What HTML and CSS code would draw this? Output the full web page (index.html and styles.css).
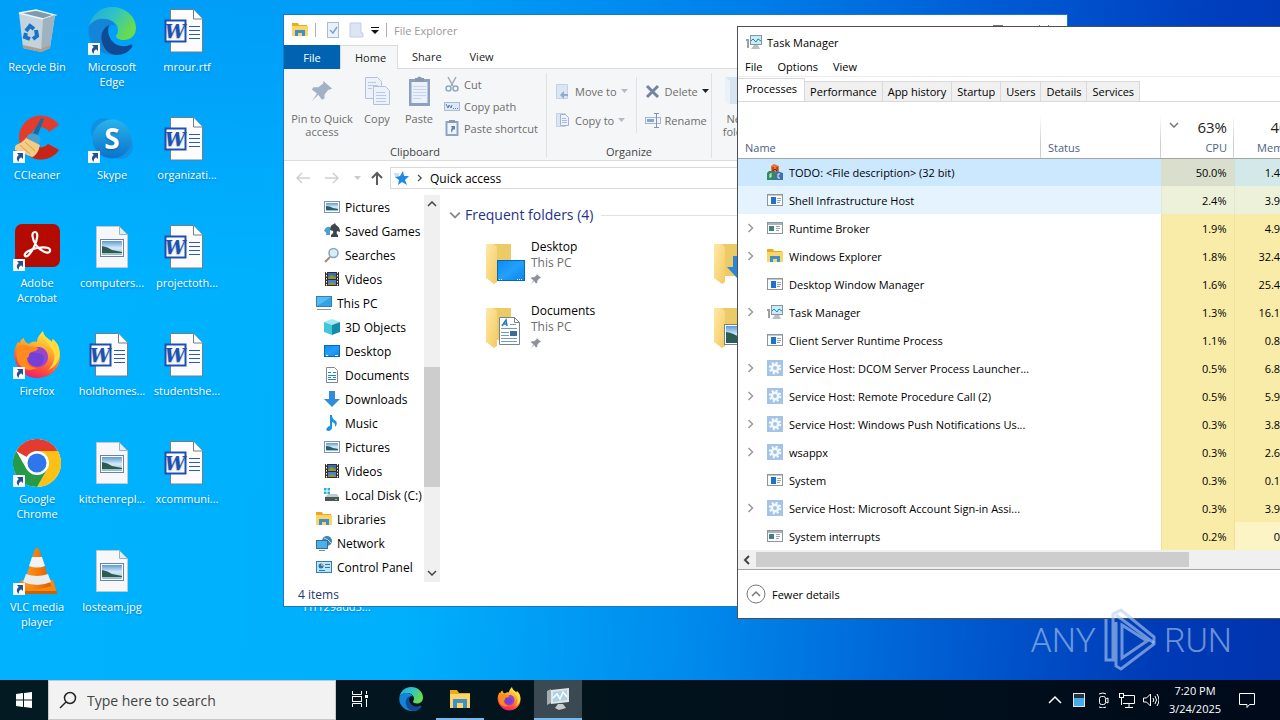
FILE: index.html
```html
<!DOCTYPE html>
<html lang="en">
<head>
    <meta charset="UTF-8">
    <meta name="viewport" content="width=device-width, initial-scale=1.0">
    <title>Desktop</title>
    <link rel="stylesheet" href="styles.css">
</head>
<body>

    <!-- shared icons -->
    <svg class="defs" aria-hidden="true">
        <defs>
            <linearGradient id="g-edge1" x1="0" y1="0" x2="1" y2="0.5">
                <stop offset="0" stop-color="#1fa9dd"/>
                <stop offset="0.5" stop-color="#2fc2c8"/>
                <stop offset="1" stop-color="#68dc4c"/>
            </linearGradient>
            <linearGradient id="g-fox" x1="0.7" y1="0" x2="0.3" y2="1">
                <stop offset="0" stop-color="#fff04a"/>
                <stop offset="0.4" stop-color="#ffa42a"/>
                <stop offset="0.75" stop-color="#ff4c3c"/>
                <stop offset="1" stop-color="#e6197a"/>
            </linearGradient>
            <linearGradient id="g-skype" x1="0" y1="0" x2="0" y2="1">
                <stop offset="0" stop-color="#28b4ec"/>
                <stop offset="1" stop-color="#0b72cc"/>
            </linearGradient>
            <linearGradient id="g-cone" x1="0" y1="0" x2="1" y2="0">
                <stop offset="0" stop-color="#ff9a1e"/>
                <stop offset="0.5" stop-color="#f57c0c"/>
                <stop offset="1" stop-color="#e05c00"/>
            </linearGradient>
            <linearGradient id="g-photo" x1="0" y1="0" x2="0" y2="1">
                <stop offset="0" stop-color="#5c9ad8"/>
                <stop offset="0.5" stop-color="#d6ebf7"/>
                <stop offset="1" stop-color="#8dbccb"/>
            </linearGradient>
            <linearGradient id="g-folder" x1="0" y1="0" x2="1" y2="1">
                <stop offset="0" stop-color="#ffe9a6"/>
                <stop offset="1" stop-color="#f3ca62"/>
            </linearGradient>
            <linearGradient id="g-screen" x1="0" y1="0" x2="1" y2="1">
                <stop offset="0" stop-color="#0c8cf0"/>
                <stop offset="0.5" stop-color="#22a0fb"/>
                <stop offset="1" stop-color="#0a86ea"/>
            </linearGradient>
        </defs>

        <symbol id="shortcut" viewBox="0 0 12 12">
            <rect width="12" height="12" fill="#f7f9fb"/>
            <path d="M4 2h6v6L8 6.200Q5.500 7.500 5.500 11Q2 7 5.800 4z" fill="#27508f"/>
        </symbol>

        <symbol id="bin" viewBox="0 0 48 48">
            <path d="M6 6l4 35 18 4 9-4 5-33z" fill="#c3d4de"/>
            <path d="M6 6l17-3 19 5-12 4z" fill="#7e9cae" stroke="#eef5f8" stroke-width="1.500"/>
            <path d="M30 12l12-4-5 33-9 4z" fill="#9fb3bf"/>
            <path d="M10 38l18 4 9-4v3l-9 4-18-4z" fill="#b59b86"/>
            <g fill="none" stroke="#1673c8" stroke-width="4">
                <path d="M13 24l4-5 4 3"/>
                <path d="M23 23l1 6-4 3"/>
                <path d="M17 32l-5-2 1-4"/>
            </g>
        </symbol>

        <symbol id="edge" viewBox="0 0 48 48">
            <path d="M1 19C4 7 13 0 24 0c14 0 24 10 24 21 0 8-6 12-12 12-5 0-8-2-8-4 0-1 2-2 2-6 0-6-6-11-13-11C9 12 4 15 1 19z" fill="url(#g-edge1)"/>
            <path d="M1 19c4-5 9-8 15-7 5 0 10 3 12 7-5-3-9 2-9 9 0 10 10 16 23 10 2-1 3 0 2 2-5 7-12 9-20 8C9 46-2 34 1 19z" fill="#1385d8"/>
            <path d="M21 18c-6 3-9 10-7 17 2 8 7 12 14 13 7 0 13-3 16-8 1-2 0-3-2-2-13 5-25-6-21-20z" fill="#114a94"/>
        </symbol>

        <symbol id="word" viewBox="0 0 48 48">
            <path d="M7.500 2.500h23l9 9.500v33h-32z" fill="#fcfcfd" stroke="#6f7f8c"/>
            <path d="M30.500 2.500V12h9" fill="#fff" stroke="#6f7f8c"/>
            <path d="M26 19.500h11M26 23.500h11M26 27.500h11M26 31.500h11" stroke="#2a5cb4"/>
            <rect x="2.500" y="13.500" width="20" height="21" fill="#fff" stroke="#1d51b0" stroke-width="2"/>
            <text x="12" y="31" text-anchor="middle" class="glyph-w">W</text>
        </symbol>

        <symbol id="jpg" viewBox="0 0 48 48">
            <path d="M8.500 3.500h23l8 8v33h-31z" fill="#f6f7f9" stroke="#c2c7cc"/>
            <path d="M31.500 3.500v8h8z" fill="#d9f0fa" stroke="#9db1bd"/>
            <rect x="12.500" y="16.500" width="23" height="17" fill="#fff" stroke="#6b8298"/>
            <rect x="14" y="18" width="20" height="14" fill="url(#g-photo)"/>
            <path d="M14 23q6 1 10 4l10 2v1H14z" fill="#2e5b50"/>
        </symbol>

        <symbol id="ccleaner" viewBox="0 0 48 48">
            <path d="M46 10A22 22 0 1 0 46 35L35 29A10 10 0 1 1 36 17z" fill="#e23c2c"/>
            <path d="M46 35A22 22 0 0 1 20 43L25 32A10 10 0 0 0 35 29z" fill="#c62418"/>
            <path d="M28 3l3 1-7 18-5-2z" fill="#23679f"/>
            <path d="M16 19q8-2 12 5l-3 5-12-6z" fill="#4ba0cf"/>
            <path d="M13 23l14 7q-2 10-8 12L2 35q-1-3 1-5 6-2 10-7z" fill="#f3cd86"/>
            <path d="M7 30l10 9M12 27l10 9" stroke="#d39b4d"/>
        </symbol>

        <symbol id="skype" viewBox="0 0 48 48">
            <circle cx="16" cy="16" r="13" fill="#1291e2"/>
            <circle cx="32" cy="31" r="13" fill="#1292e4"/>
            <circle cx="24" cy="24" r="19.500" fill="url(#g-skype)"/>
            <text x="24" y="34" text-anchor="middle" class="glyph-s">S</text>
        </symbol>

        <symbol id="adobe" viewBox="0 0 48 48">
            <rect x="2" y="1" width="45" height="43" rx="7" fill="#b30b00"/>
            <path d="M12 33c-2-3 6-7 12-8s14-1 13 3-10 0-14-6-5-13-1-13 2 9-1 15-7 11-9 9z" fill="none" stroke="#fff" stroke-width="2.200"/>
        </symbol>

        <symbol id="firefox" viewBox="0 0 48 48">
            <path d="M30 0c-5 5-6 8-6 11-3-1-6 0-8 2-3-1-5-3-5-6-3 1-4 3-4 5L5 11C1 17 0 24 3 32c4 9 12 15 21 15 13 0 23-9 23-22 0-8-4-13-8-17v4C37 8 30 6 30 0z" fill="url(#g-fox)"/>
            <circle cx="24" cy="26" r="10" fill="#7440d8"/>
            <path d="M24 16c8 0 11 5 11 10 0 7-6 11-12 10 5-1 8-4 8-8 0-5-4-6-8-6-3 0-5-2-5-4z" fill="#9b44cc"/>
            <path d="M4 16c5-2 9-2 12-1 4 0 7 1 9 2-1 4-6 3-8 5s0 4-3 5c-1 6 4 10 10 10-8 4-16 1-19-6C3 26 3 21 4 16z" fill="#ff8a1e"/>
            <path d="M30 0c-3 9 8 12 11 22 2 7-2 14-6 17C46 35 49 23 45 14c-1-2-3-4-5-6v4C37 8 30 6 30 0z" fill="#ffdc3e"/>
        </symbol>

        <symbol id="chrome" viewBox="0 0 48 48">
            <circle cx="24" cy="24" r="24" fill="#fff"/>
            <path d="M24 24L3.200 12A24 24 0 0 1 44.800 12z" fill="#e33b2e"/>
            <path d="M24 12H44.800A24 24 0 0 1 24 48L34.400 30z" fill="#fbc116"/>
            <path d="M34.400 30L24 48A24 24 0 0 1 3.200 12L13.600 30z" fill="#269a46"/>
            <circle cx="24" cy="24" r="12" fill="#fff"/>
            <circle cx="24" cy="24" r="9.500" fill="#2f75ec"/>
        </symbol>

        <symbol id="vlc" viewBox="0 0 48 48">
            <path d="M8 33h32l4 13H4z" fill="#f48a10"/>
            <path d="M4 44h40v3H4z" fill="#cf6200"/>
            <path d="M22 2q2-2 4 0l12 37q-14 6-28 0z" fill="url(#g-cone)"/>
            <path d="M19 10h10l3 9q-8 3-16 0z" fill="#f3f3f3"/>
            <path d="M13 27q11 4 22 0l3 8q-14 6-28 0z" fill="#ebebeb"/>
        </symbol>

        <symbol id="folder" viewBox="0 0 16 16">
            <path d="M0 1h6l1 2h8v11H0z" fill="#e8ab1d"/>
            <path d="M0 4h16v10H0z" fill="#fbd664"/>
            <path d="M3 8h10v6h-3v-3H6v3H3z" fill="#3f8fd0"/>
        </symbol>

        <symbol id="picture" viewBox="0 0 16 16">
            <rect x="0.500" y="2.500" width="15" height="11" fill="#fff" stroke="#7f93a8"/>
            <rect x="2" y="4" width="12" height="8" fill="url(#g-photo)"/>
            <path d="M2 7q4 0 7 2l5 1v1H2z" fill="#2d5f6b"/>
        </symbol>

        <symbol id="games" viewBox="0 0 16 16">
            <path d="M0 8q2-5 6-4v8H2q1-3-2-4z" fill="#4aa0d6"/>
            <path d="M6 7q0-5 4-6l1-1 1 2q4 2 4 7l-3-1q-1 3 1 4v2H7v-2q3-2 2-4z" fill="#3d454d"/>
        </symbol>

        <symbol id="search" viewBox="0 0 16 16">
            <path d="M1 15l5-5" stroke="#9c8b7d" stroke-width="2"/>
            <circle cx="9.500" cy="6" r="4.500" fill="#d4effc" stroke="#8ba3b5" stroke-width="1.500"/>
        </symbol>

        <symbol id="video" viewBox="0 0 16 16">
            <rect x="1" y="1" width="14" height="14" fill="#30302c"/>
            <path d="M2.500 1v14M13.500 1v14" stroke="#fff" stroke-dasharray="1.500 1.500"/>
            <rect x="4" y="2" width="8" height="6" fill="#4467b8"/>
            <rect x="4" y="9" width="8" height="5" fill="#4f7ae0"/>
            <path d="M4 7l3-3 5 2v2H4zM4 13l4-2 4 2v1H4z" fill="#8a9a2c"/>
        </symbol>

        <symbol id="pc" viewBox="0 0 16 16">
            <rect x="0.500" y="1.500" width="15" height="10" fill="#56bdf4" stroke="#3b7fa8"/>
            <path d="M1 11L15 2v9z" fill="#2fa3ea"/>
            <path d="M1 14.500h14" stroke="#8d979e"/>
        </symbol>

        <symbol id="cube" viewBox="0 0 16 16">
            <path d="M0 3l8-3 8 3-8 3z" fill="#a2e9f1"/>
            <path d="M0 3l8 3v10l-8-3z" fill="#43c6da"/>
            <path d="M8 6l8-3v10l-8 3z" fill="#158da8"/>
        </symbol>

        <symbol id="desktop" viewBox="0 0 16 16">
            <rect x="0.500" y="2.500" width="15" height="11" fill="url(#g-screen)" stroke="#0768b8"/>
            <path d="M2 12.500h2M11 12.500h3" stroke="#fff"/>
        </symbol>

        <symbol id="doc" viewBox="0 0 16 16">
            <path d="M2.500 0.500h8l3 3v12h-11z" fill="#fff" stroke="#7b8690"/>
            <path d="M4 5.500h3M9 5.500h3M4 8.500h8M4 10.500h3M4 12.500h8M9 10.500h3" stroke="#2383c6"/>
        </symbol>

        <symbol id="download" viewBox="0 0 16 16">
            <path d="M5 0h6v8h5l-8 8-8-8h5z" fill="#2f8ddc"/>
        </symbol>

        <symbol id="music" viewBox="0 0 16 16">
            <path d="M8 0q0 4 4 6 2 3-1 6 1-4-3-5v6q-1 3-4 3-3-1-1-3 1-2 3-2V0z" fill="#1795e0"/>
        </symbol>

        <symbol id="disk" viewBox="0 0 16 16">
            <path d="M0 1h2.500v2.500H0zM3.500 1H6v2.500H3.500zM0 4.500h2.500V7H0zM3.500 4.500H6V7H3.500z" fill="#1eb4dc"/>
            <path d="M4 7h9l2 3H1z" fill="#c3c8cb"/>
            <path d="M1 10h14v4H1z" fill="#4c5559"/>
            <path d="M11 12.500h2" stroke="#5de06a"/>
        </symbol>

        <symbol id="network" viewBox="0 0 16 16">
            <circle cx="11" cy="6" r="5" fill="#3f83b4"/>
            <path d="M8 3q4 1 7 5" stroke="#b5daee" fill="none"/>
            <rect x="0.500" y="5.500" width="11" height="8" fill="#49b0ec" stroke="#31718f"/>
            <path d="M3 15.500h6" stroke="#7f8c94"/>
        </symbol>

        <symbol id="control" viewBox="0 0 16 16">
            <rect x="0.500" y="2.500" width="15" height="11" fill="#bfe4f8" stroke="#2f7fb0"/>
            <circle cx="5" cy="7" r="2.500" fill="#1d78c8"/>
            <path d="M5 7V4.500A2.500 2.500 0 0 1 7.500 7z" fill="#f0a020"/>
            <path d="M9 5.500h5M9 8.500h5M3 11.500h6" stroke="#1d78c8"/>
        </symbol>

        <symbol id="pin" viewBox="0 0 16 16">
            <path d="M9 0l7 6-2 1-1 0-3 4v3l-2 1-3-4-5 5 4-6-4-3 1-2h4l4-3z" fill="currentColor"/>
        </symbol>

        <symbol id="big-folder" viewBox="0 0 40 44">
            <path d="M8 2h17v32H8z" fill="#ecca67"/>
            <path d="M0 2h8l3 3v35l-3 2-8-6z" fill="url(#g-folder)"/>
        </symbol>

        <symbol id="taskmgr" viewBox="0 0 16 16">
            <rect x="4.500" y="1.500" width="11" height="9" fill="#c8ecf8" stroke="#8a9499"/>
            <path d="M5 7l2-2 3 3 2-3 3 2" fill="none" stroke="#2387b4"/>
            <path d="M0 5h3v9H1V7H0z" fill="#9aa1a6"/>
            <path d="M8 11h4l2 4H5z" fill="#b9bfc3"/>
        </symbol>

        <symbol id="app" viewBox="0 0 16 16">
            <rect x="0.500" y="2.500" width="15" height="11" fill="#fff" stroke="#8e969c"/>
            <path d="M1 3.500h14" stroke="#c3c8cc"/>
            <rect x="4" y="5" width="5" height="7" fill="#1874cf"/>
            <path d="M10 6.500h4M10 8.500h4M10 10.500h3" stroke="#8fa2b3"/>
        </symbol>

        <symbol id="app2" viewBox="0 0 16 16">
            <rect x="0.500" y="2.500" width="15" height="11" fill="#fff" stroke="#8e969c"/>
            <path d="M1 4h14" stroke="#a9b4ba" stroke-width="2"/>
            <rect x="2" y="6" width="5" height="5" fill="#3f7f86"/>
            <path d="M9 6.500h4M9 8.500h4M9 10.500h3" stroke="#98a6ad"/>
        </symbol>

        <symbol id="gear" viewBox="0 0 16 16">
            <rect width="16" height="16" fill="#a3c4e6"/>
            <circle cx="8" cy="8" r="5" fill="none" stroke="#f1f7fd" stroke-width="2.500" stroke-dasharray="2 1.930"/>
            <circle cx="8" cy="8" r="3.200" fill="none" stroke="#f1f7fd" stroke-width="2.500"/>
        </symbol>

        <symbol id="blocks" viewBox="0 0 16 16">
            <path d="M4 2l3-2 5 2v7H4z" fill="#ee7433"/>
            <path d="M6 3v4l2-2 2 2V3" stroke="#7e1f10" fill="none"/>
            <path d="M0 9l2-2h6v9H0z" fill="#2f8b5d"/>
            <path d="M8 9l2-2 6 2v7H8z" fill="#3c70ae"/>
            <path d="M3 14v-4h2M3 12h2M13 10h-2v4h2" stroke="#e5f3f0" fill="none"/>
        </symbol>

        <symbol id="chev-r" viewBox="0 0 8 10">
            <path d="M1.500 1L5.500 5l-4 4" fill="none" stroke="currentColor" stroke-width="1.500"/>
        </symbol>
        <symbol id="chev-d" viewBox="0 0 10 6">
            <path d="M1 1l4 4 4-4" fill="none" stroke="currentColor" stroke-width="1.500"/>
        </symbol>
        <symbol id="chev-u" viewBox="0 0 10 6">
            <path d="M1 5l4-4 4 4" fill="none" stroke="currentColor" stroke-width="1.500"/>
        </symbol>
        <symbol id="caret" viewBox="0 0 7 4">
            <path d="M0 0h7L3.500 4z" fill="currentColor"/>
        </symbol>
    </svg>

    <main class="desktop">
        <div class="icons">
            <a class="icon" href="#"><svg><use href="#bin"/></svg><span>Recycle Bin</span></a>
            <a class="icon" href="#"><svg><use href="#ccleaner"/><use href="#shortcut" y="36" width="12" height="12"/></svg><span>CCleaner</span></a>
            <a class="icon" href="#"><svg><use href="#adobe"/><use href="#shortcut" y="36" width="12" height="12"/></svg><span>Adobe Acrobat</span></a>
            <a class="icon" href="#"><svg><use href="#firefox"/><use href="#shortcut" y="36" width="12" height="12"/></svg><span>Firefox</span></a>
            <a class="icon" href="#"><svg><use href="#chrome"/><use href="#shortcut" y="36" width="12" height="12"/></svg><span>Google Chrome</span></a>
            <a class="icon" href="#"><svg><use href="#vlc"/><use href="#shortcut" y="36" width="12" height="12"/></svg><span>VLC media player</span></a>
            <a class="icon" href="#"><svg><use href="#edge"/><use href="#shortcut" y="36" width="12" height="12"/></svg><span>Microsoft Edge</span></a>
            <a class="icon" href="#"><svg><use href="#skype"/><use href="#shortcut" y="36" width="12" height="12"/></svg><span>Skype</span></a>
            <a class="icon" href="#"><svg><use href="#jpg"/></svg><span>computers...</span></a>
            <a class="icon" href="#"><svg><use href="#word"/></svg><span>holdhomes...</span></a>
            <a class="icon" href="#"><svg><use href="#jpg"/></svg><span>kitchenrepl...</span></a>
            <a class="icon" href="#"><svg><use href="#jpg"/></svg><span>losteam.jpg</span></a>
            <a class="icon" href="#"><svg><use href="#word"/></svg><span>mrour.rtf</span></a>
            <a class="icon" href="#"><svg><use href="#word"/></svg><span>organizati...</span></a>
            <a class="icon" href="#"><svg><use href="#word"/></svg><span>projectoth...</span></a>
            <a class="icon" href="#"><svg><use href="#word"/></svg><span>studentshe...</span></a>
            <a class="icon" href="#"><svg><use href="#word"/></svg><span>xcommuni...</span></a>
            <a class="icon behind" href="#"><svg><use href="#app"/></svg><span>f1f129add5...</span></a>
        </div>

        <div class="watermark">
            <span>ANY</span>
            <svg width="56" height="64" viewBox="0 0 56 64">
                <g fill="none" stroke="currentColor" stroke-width="3">
                    <path d="M4 11v41h7V6l8-4 33 27v7L19 61l-5-3V14"/>
                    <path d="M20 17v33l25-17z"/>
                    <path d="M14 7l38 28"/>
                </g>
            </svg>
            <span>RUN</span>
        </div>

        <section class="window explorer">
            <header class="titlebar">
                <svg class="i16"><use href="#folder"/></svg>
                <i class="tsep"></i>
                <svg class="i16" viewBox="0 0 16 16"><rect x="2.500" y="0.500" width="11" height="15" fill="#eaf1fa" stroke="#a9bcd6"/><path d="M5 8l3 3 4-6" fill="none" stroke="#7fa3d4" stroke-width="1.500"/></svg>
                <svg class="i16" viewBox="0 0 16 16"><path d="M2 1h11v10h2v4H2z" fill="#dbe5f3" stroke="#c2d0e4"/></svg>
                <svg class="quick" viewBox="0 0 8 7"><path d="M0 0.500h8" stroke="#111"/><path d="M0 3h8L4 7z" fill="#111"/></svg>
                <i class="tsep"></i>
                <span class="title">File Explorer</span>
                <div class="controls">
                    <button aria-label="Minimize"><svg viewBox="0 0 10 10"><path d="M0 5.500h10" stroke="#777"/></svg></button>
                    <button aria-label="Maximize"><svg viewBox="0 0 10 10"><rect x="0.500" y="0.500" width="9" height="9" fill="none" stroke="#777"/></svg></button>
                    <button aria-label="Close"><svg viewBox="0 0 10 10"><path d="M0 0l10 10M10 0L0 10" stroke="#777"/></svg></button>
                </div>
            </header>

            <nav class="tabs">
                <button class="file">File</button>
                <button class="current">Home</button>
                <button>Share</button>
                <button>View</button>
            </nav>

            <div class="ribbon">
                <div class="group clip">
                    <div class="tools">
                        <button class="big wide"><svg viewBox="0 0 32 32"><g color="#a3b1c4"><use href="#pin" x="6" y="6" width="20" height="20"/></g></svg>Pin to Quick access</button>
                        <button class="big"><svg viewBox="0 0 32 32"><g fill="#edf2fa" stroke="#b3c2da"><path d="M4.500 2.500h12l4 4v17h-16z"/><path d="M12.500 11.500h12l4 4v14h-16z"/></g><path d="M7 7.500h8M7 10.500h10M7 13.500h4M15 17.500h9M15 20.500h10M15 23.500h10M15 26.500h10" stroke="#b6c9e6"/></svg>Copy</button>
                        <button class="big"><svg viewBox="0 0 32 32"><rect x="6" y="4" width="21" height="27" fill="#8da0bf"/><rect x="8.500" y="7" width="16" height="21" fill="#eaf1fb"/><path d="M12 3h2q2-3 5 0h2v4h-9z" fill="#8998ad"/><path d="M10 11.500h13M10 14.500h13M10 17.500h13M10 20.500h13M10 23.500h8" stroke="#c6d6ee"/></svg>Paste</button>
                        <div class="smalls">
                            <button><svg class="i16" viewBox="0 0 16 16"><path d="M4 1l5 9M12 1L7 10" stroke="#a0aab8" stroke-width="1.500"/><circle cx="4.500" cy="12.500" r="2.500" fill="none" stroke="#94a7c4" stroke-width="1.500"/><circle cx="11.500" cy="12.500" r="2.500" fill="none" stroke="#94a7c4" stroke-width="1.500"/></svg>Cut</button>
                            <button><svg class="i16" viewBox="0 0 16 16"><rect x="0.500" y="4.500" width="15" height="8" fill="#dde7f5" stroke="#aabbd6"/><path d="M2 6l2 4 1-3 2 3 1-3M9 10.500h1M11 10.500h1M13 10.500h1" fill="none" stroke="#5f7faf"/></svg>Copy path</button>
                            <button><svg class="i16" viewBox="0 0 16 16"><rect x="2.500" y="2" width="11" height="13" fill="#f0f5fc" stroke="#8fa3c2" stroke-width="2"/><rect x="5" y="0" width="6" height="3" fill="#8998ad"/><path d="M7 6h4v4l-1-1q-2 1-2 4-2-3 0-5z" fill="#5b80bb"/></svg>Paste shortcut</button>
                        </div>
                    </div>
                    <p>Clipboard</p>
                </div>
                <div class="group organize">
                    <div class="tools">
                        <div class="smalls two">
                            <button><svg class="i16" viewBox="0 0 16 16"><path d="M1.500 1.500h11v14h-11z" fill="#dce5f2" stroke="#c5d1e4"/><path d="M13 11H9V8l-4 4 4 4v-3h4z" fill="#8fa9d0"/></svg>Move to<svg class="caret grey"><use href="#caret"/></svg></button>
                            <button><svg class="i16" viewBox="0 0 16 16"><path d="M1.500 1.500h9v13h-9z" fill="#dce5f2" stroke="#c5d1e4"/><path d="M5.500 2.500h5l3 3v8h-8z" fill="#eef3fb" stroke="#9fb3d3"/><path d="M7 6.500h4M7 8.500h5M7 10.500h5" stroke="#a8bbd9"/></svg>Copy to<svg class="caret grey"><use href="#caret"/></svg></button>
                        </div>
                        <i class="vsep"></i>
                        <div class="smalls two">
                            <button><svg class="i16" viewBox="0 0 16 16"><path d="M2 3l11 11M13 3L2 14" stroke="#7286a3" stroke-width="3"/></svg>Delete<svg class="caret"><use href="#caret"/></svg></button>
                            <button><svg class="i16" viewBox="0 0 16 16"><rect x="0.500" y="5.500" width="15" height="6" fill="#eef3fa" stroke="#a4b6d2"/><path d="M2 8.500h7" stroke="#8ba5cf" stroke-width="3"/><path d="M9 1.500h5M9 15.500h5M11.500 2v13" stroke="#7f93b3"/></svg>Rename</button>
                        </div>
                    </div>
                    <p>Organize</p>
                </div>
                <div class="group">
                    <div class="tools">
                        <button class="big"><svg viewBox="0 0 32 32"><path d="M3 2h22v27H8l-5-4z" fill="#d9e4f1"/><path d="M3 2l5 4v24l-5-4z" fill="#eaf1f9"/></svg>New folder</button>
                    </div>
                </div>
            </div>

            <div class="addressbar">
                <button aria-label="Back"><svg viewBox="0 0 14 12"><path d="M14 6H1M6 1L1 6l5 5" fill="none" stroke="#d0d0d0" stroke-width="1.500"/></svg></button>
                <button aria-label="Forward"><svg viewBox="0 0 14 12"><path d="M0 6h13M8 1l5 5-5 5" fill="none" stroke="#d0d0d0" stroke-width="1.500"/></svg></button>
                <button class="hist" aria-label="Recent"><svg class="caret"><use href="#caret"/></svg></button>
                <button class="up" aria-label="Up"><svg viewBox="0 0 12 14"><path d="M6 14V2M1 7l5-5 5 5" fill="none" stroke="#5c5c5c" stroke-width="2"/></svg></button>
                <div class="path">
                    <svg class="i16" viewBox="0 0 16 16"><path d="M9 1l1 5 5 0-4 4 2 5-5-3-4 3 1-5-4-3 5-1z" fill="#1f8be0"/><path d="M0 4h5M1 6h4" stroke="#8fc6ee"/></svg>
                    <svg class="arrow"><use href="#chev-r"/></svg>
                    <span>Quick access</span>
                </div>
            </div>

            <div class="body">
                <div class="tree">
                    <ul>
                        <li><svg class="i16"><use href="#picture"/></svg>Pictures</li>
                        <li><svg class="i16"><use href="#games"/></svg>Saved Games</li>
                        <li><svg class="i16"><use href="#search"/></svg>Searches</li>
                        <li><svg class="i16"><use href="#video"/></svg>Videos</li>
                        <li class="root"><svg class="i16"><use href="#pc"/></svg>This PC</li>
                        <li><svg class="i16"><use href="#cube"/></svg>3D Objects</li>
                        <li><svg class="i16"><use href="#desktop"/></svg>Desktop</li>
                        <li><svg class="i16"><use href="#doc"/></svg>Documents</li>
                        <li><svg class="i16"><use href="#download"/></svg>Downloads</li>
                        <li><svg class="i16"><use href="#music"/></svg>Music</li>
                        <li><svg class="i16"><use href="#picture"/></svg>Pictures</li>
                        <li><svg class="i16"><use href="#video"/></svg>Videos</li>
                        <li><svg class="i16"><use href="#disk"/></svg>Local Disk (C:)</li>
                        <li class="root"><svg class="i16"><use href="#folder"/></svg>Libraries</li>
                        <li class="root"><svg class="i16"><use href="#network"/></svg>Network</li>
                        <li class="root"><svg class="i16"><use href="#control"/></svg>Control Panel</li>
                    </ul>
                    <div class="vscroll">
                        <svg><use href="#chev-u"/></svg>
                        <div class="track"><div class="thumb"></div></div>
                        <svg><use href="#chev-d"/></svg>
                    </div>
                </div>
                <div class="pane">
                    <h2><svg><use href="#chev-d"/></svg>Frequent folders (4)</h2>
                    <div class="folders">
                        <div class="folder">
                            <svg viewBox="0 0 40 44"><use href="#big-folder"/><rect x="11.500" y="18.500" width="27" height="20" fill="url(#g-screen)" stroke="#0768b8"/><path d="M13 37.500h3M31 37.500h6" stroke="#fff" stroke-dasharray="1 1"/></svg>
                            <div><b>Desktop</b><span>This PC</span><svg class="pin"><use href="#pin"/></svg></div>
                        </div>
                        <div class="folder">
                            <svg viewBox="0 0 40 44"><use href="#big-folder"/><path d="M19 14h7v11h7l-10 11-10-11h6z" fill="#2f86d4"/></svg>
                        </div>
                        <div class="folder">
                            <svg viewBox="0 0 40 44"><use href="#big-folder"/><path d="M13.500 11.500h15l5 5v22h-20z" fill="#fff" stroke="#76828c"/><path d="M28.500 11.500v5h5" fill="none" stroke="#76828c"/><path d="M24 18.500h6M15 22.500h16M15 26.500h8M15 29.500h8M15 32.500h16M15 35.500h16" stroke="#6f9bc0"/><path d="M16 20l4-6 1 6M18 18h3" fill="none" stroke="#1b7fc8" stroke-width="1.500"/><rect x="24" y="25" width="7" height="5" fill="#3a6f93"/></svg>
                            <div><b>Documents</b><span>This PC</span><svg class="pin"><use href="#pin"/></svg></div>
                        </div>
                        <div class="folder">
                            <svg viewBox="0 0 40 44"><use href="#big-folder"/><rect x="10.500" y="18.500" width="27" height="20" fill="#fff" stroke="#76828c"/><rect x="12" y="20" width="24" height="17" fill="url(#g-photo)"/><path d="M12 26q8 1 14 6l10 2v3H12z" fill="#2c5c57"/></svg>
                        </div>
                    </div>
                </div>
            </div>
            <footer>4 items</footer>
        </section>

        <section class="window taskman">
            <header class="titlebar"><svg class="i16"><use href="#taskmgr"/></svg><span>Task Manager</span></header>
            <nav class="menu">
                <button>File</button>
                <button>Options</button>
                <button>View</button>
            </nav>
            <nav class="tm-tabs">
                <button class="current">Processes</button>
                <button>Performance</button>
                <button>App history</button>
                <button>Startup</button>
                <button>Users</button>
                <button>Details</button>
                <button>Services</button>
            </nav>
            <table>
                <thead>
                    <tr>
                        <th class="c-name">Name</th>
                        <th class="c-status">Status</th>
                        <th class="c-num"><div class="total"><svg><use href="#chev-d"/></svg>63%</div>CPU</th>
                        <th class="c-num"><div class="total">40%</div>Memory</th>
                    </tr>
                </thead>
                <tbody>
                    <tr class="selected"><td><div><i></i><svg class="i16"><use href="#blocks"/></svg>TODO: &lt;File description&gt; (32 bit)</div></td><td></td><td>50.0%</td><td>1.4 MB</td></tr>
                    <tr class="hovered"><td><div><i></i><svg class="i16"><use href="#app"/></svg>Shell Infrastructure Host</div></td><td></td><td>2.4%</td><td>3.9 MB</td></tr>
                    <tr><td><div><svg class="exp"><use href="#chev-r"/></svg><svg class="i16"><use href="#app2"/></svg>Runtime Broker</div></td><td></td><td>1.9%</td><td>4.9 MB</td></tr>
                    <tr><td><div><svg class="exp"><use href="#chev-r"/></svg><svg class="i16"><use href="#folder"/></svg>Windows Explorer</div></td><td></td><td>1.8%</td><td>32.4 MB</td></tr>
                    <tr><td><div><i></i><svg class="i16"><use href="#app"/></svg>Desktop Window Manager</div></td><td></td><td>1.6%</td><td>25.4 MB</td></tr>
                    <tr><td><div><svg class="exp"><use href="#chev-r"/></svg><svg class="i16"><use href="#taskmgr"/></svg>Task Manager</div></td><td></td><td>1.3%</td><td>16.1 MB</td></tr>
                    <tr><td><div><i></i><svg class="i16"><use href="#app"/></svg>Client Server Runtime Process</div></td><td></td><td>1.1%</td><td>0.8 MB</td></tr>
                    <tr><td><div><svg class="exp"><use href="#chev-r"/></svg><svg class="i16"><use href="#gear"/></svg>Service Host: DCOM Server Process Launcher...</div></td><td></td><td>0.5%</td><td>6.8 MB</td></tr>
                    <tr><td><div><svg class="exp"><use href="#chev-r"/></svg><svg class="i16"><use href="#gear"/></svg>Service Host: Remote Procedure Call (2)</div></td><td></td><td>0.5%</td><td>5.9 MB</td></tr>
                    <tr><td><div><svg class="exp"><use href="#chev-r"/></svg><svg class="i16"><use href="#gear"/></svg>Service Host: Windows Push Notifications Us...</div></td><td></td><td>0.3%</td><td>3.8 MB</td></tr>
                    <tr><td><div><svg class="exp"><use href="#chev-r"/></svg><svg class="i16"><use href="#gear"/></svg>wsappx</div></td><td></td><td>0.3%</td><td>2.6 MB</td></tr>
                    <tr><td><div><i></i><svg class="i16"><use href="#app"/></svg>System</div></td><td></td><td>0.3%</td><td>0.1 MB</td></tr>
                    <tr><td><div><svg class="exp"><use href="#chev-r"/></svg><svg class="i16"><use href="#gear"/></svg>Service Host: Microsoft Account Sign-in Assi...</div></td><td></td><td>0.3%</td><td>3.9 MB</td></tr>
                    <tr><td><div><i></i><svg class="i16"><use href="#app2"/></svg>System interrupts</div></td><td></td><td>0.2%</td><td class="low">0 MB</td></tr>
                </tbody>
            </table>
            <div class="hscroll"><svg viewBox="0 0 8 10"><path d="M6 1L2 5l4 4" fill="none" stroke="#444" stroke-width="2"/></svg><div class="thumb"></div></div>
            <footer>
                <button><svg viewBox="0 0 20 20"><circle cx="10" cy="10" r="9" fill="none" stroke="#777"/><path d="M6 12l4-4 4 4" fill="none" stroke="#777" stroke-width="1.500"/></svg>Fewer details</button>
            </footer>
        </section>
    </main>

    <div class="taskbar">
        <button class="start" aria-label="Start"><svg viewBox="0 0 16 16"><path d="M0 2l7-1v6.500H0zM8 1l8-1v7.500H8zM0 8.500h7V15l-7-1zM8 8.500h8V16l-8-1z" fill="#fff"/></svg></button>
        <label class="search" for="search-box">
            <svg viewBox="0 0 18 18"><circle cx="11" cy="7" r="5.500" fill="none" stroke="#222" stroke-width="1.500"/><path d="M7 11l-6 6" stroke="#222" stroke-width="1.500"/></svg>
            <input id="search-box" type="text" placeholder="Type here to search">
        </label>
        <div class="apps">
            <button aria-label="Task View"><svg class="tv" viewBox="0 0 18 18"><g fill="none" stroke="#fff"><path d="M1.500 1v3.500h9V1M1.500 17v-3.500h9V17M15.500 1v3M15.500 9v8"/><rect x="1.500" y="6.500" width="9" height="5"/></g><rect x="14" y="5" width="3" height="3" fill="#fff"/></svg></button>
            <button aria-label="Edge"><svg viewBox="0 0 48 48"><use href="#edge"/></svg></button>
            <button class="open" aria-label="File Explorer"><svg viewBox="0 0 24 24"><path d="M2 3h7l2 3h11v15H2z" fill="#e8ab1d"/><path d="M2 7h20v14H2z" fill="#fbd664"/><path d="M5 12h14v9h-4v-5H9v5H5z" fill="#3f8fd0"/></svg></button>
            <button aria-label="Firefox"><svg viewBox="0 0 48 48"><use href="#firefox"/></svg></button>
            <button class="open active" aria-label="Task Manager"><svg viewBox="0 0 24 24"><path d="M1 4l4-2v14l-4 2z" fill="#a6adb1"/><path d="M5 3l18-2v14L5 17z" fill="#dfe5e8"/><path d="M7 5l14-2v10L7 15z" fill="#a9d3e6"/><path d="M7 11l4-4 3 5 3-7 4 5" fill="none" stroke="#fff" stroke-width="1.500"/><path d="M12 17h5l3 4-7 2-4-2z" fill="#c5cbce"/></svg></button>
        </div>
        <div class="tray">
            <svg viewBox="0 0 16 16"><path d="M2 11l6-6 6 6" fill="none" stroke="#fff" stroke-width="1.500"/></svg>
            <svg viewBox="0 0 16 16"><rect x="2.500" y="1.500" width="11" height="13" fill="#4ba9ea" stroke="#dbe7ef"/><path d="M3 2h10v4H3z" fill="#24343e"/></svg>
            <svg viewBox="0 0 16 16"><g fill="none" stroke="#fff"><rect x="4.500" y="4.500" width="6" height="8" rx="2"/><path d="M11 7l2-1v5l-2-1M4 2q4-2 7 0M4 15q4 2 7 0"/></g></svg>
            <svg viewBox="0 0 16 16"><g fill="none" stroke="#fff"><path d="M5 3.500h10.500v8H4M10 12v3M6 15.500h8"/><rect x="0.500" y="1.500" width="4" height="4"/><path d="M2.500 6v7"/></g></svg>
            <svg viewBox="0 0 16 16"><g fill="none" stroke="#fff"><path d="M0.500 6h3l4-4v12l-4-4h-3zM10 6q1.500 2 0 4M12 4q3 4 0 8M14 2q4 6 0 12"/></g></svg>
            <div class="clock"><span>7:20 PM</span><span>3/24/2025</span></div>
            <button aria-label="Notifications"><svg viewBox="0 0 16 16"><path d="M0.500 1.500h15v11h-5l-2.500 3v-3h-7.500z" fill="none" stroke="#fff"/></svg></button>
        </div>
    </div>
</body>
</html>
```
FILE: styles.css
```css
* {
    box-sizing: border-box;
}

body {
    margin: 0;
    height: 100vh;
    display: flex;
    flex-direction: column;
    overflow: hidden;
    font-family: "Open Sans", "Noto Sans", sans-serif;
    font-size: 11px;
    color: #000;
}

button {
    font: inherit;
    color: inherit;
    background: none;
    border: none;
    padding: 0;
    margin: 0;
}

i {
    display: block;
}

svg {
    display: block;
    flex: none;
}

.defs {
    position: absolute;
    width: 0;
    height: 0;
}

.i16 {
    width: 16px;
    height: 16px;
}

.glyph-w {
    font: italic bold 18px "DejaVu Serif", serif;
    fill: #1d51b0;
}

.glyph-s {
    font: bold 28px "Open Sans", sans-serif;
    fill: #fff;
}

/* desktop */

.desktop {
    flex: 1;
    position: relative;
    overflow: hidden;
    background:
        linear-gradient(180deg, rgba(0, 80, 220, 0.2), rgba(0, 80, 220, 0) 40%),
        linear-gradient(95deg, #00b2ff 0%, #00b0fd 34%, #008aec 56%, #005cd2 75%, #003ab6 91%, #0034ae 100%);
}

.icons {
    display: grid;
    grid-auto-flow: column;
    grid-template-rows: repeat(6, 108px);
    grid-auto-columns: 75px;
}

.icon {
    display: flex;
    flex-direction: column;
    align-items: center;
    gap: 4px;
    width: 74px;
    padding-top: 7px;
    color: #fff;
    text-decoration: none;
    text-align: center;
    line-height: 15px;
    text-shadow: 0 1px 2px rgba(0, 40, 90, 0.4);
}

.icon svg {
    width: 48px;
    height: 48px;
}

.behind {
    grid-column: 5;
    grid-row: 6;
}

.watermark {
    position: absolute;
    z-index: 1;
    right: 48px;
    bottom: 8px;
    display: flex;
    align-items: center;
    gap: 6px;
    font-family: "Roboto", sans-serif;
    font-weight: 300;
    font-size: 34px;
    color: rgba(180, 205, 238, 0.6);
}

.window {
    position: absolute;
    display: flex;
    flex-direction: column;
    background: #fff;
}

.titlebar {
    display: flex;
    align-items: center;
    height: 30px;
}

/* file explorer */

.explorer {
    left: 283px;
    top: 14px;
    width: 785px;
    height: 593px;
    border: 1px solid #1878c4;
}

.explorer .titlebar {
    padding-left: 8px;
    gap: 7px;
    color: #999;
}

.tsep {
    width: 1px;
    height: 14px;
    background: #b0b0b0;
}

.explorer .titlebar .tsep + .i16 {
    margin-left: 2px;
}

.quick {
    width: 8px;
    height: 7px;
}

.controls {
    margin-left: auto;
    display: flex;
}

.controls button {
    width: 46px;
    height: 30px;
    display: grid;
    place-items: center;
}

.controls svg {
    width: 10px;
    height: 10px;
}

.tabs {
    display: flex;
    height: 24px;
    color: #222;
    border-bottom: 1px solid #dadbdc;
}

.tabs button {
    padding: 0 14px;
}

.tabs .file {
    width: 56px;
    height: 24px;
    background: #0063b1;
    color: #fff;
}

.tabs .current {
    width: 58px;
    height: 24px;
    background: #f5f6f7;
    border: 1px solid #dadbdc;
    border-bottom: none;
}

.ribbon {
    display: flex;
    height: 92px;
    padding: 4px 0 2px;
    background: #f5f6f7;
    border-bottom: 1px solid #dadbdc;
    color: #6d6d6d;
    line-height: 13px;
}

.group {
    display: flex;
    flex-direction: column;
    justify-content: space-between;
    border-right: 1px solid #e0e1e2;
}

.clip {
    width: 263px;
}

.organize {
    width: 165px;
}

.group p {
    margin: 0;
    color: #444;
    text-align: center;
}

.tools {
    display: flex;
}

.big {
    width: 42px;
    display: flex;
    flex-direction: column;
    align-items: center;
    gap: 3px;
}

.group:last-child .big {
    width: 52px;
}

.wide {
    width: 68px;
    margin-left: 4px;
}

.big svg {
    width: 32px;
    height: 36px;
}

.smalls {
    display: flex;
    flex-direction: column;
    padding-left: 4px;
}

.smalls button {
    display: flex;
    align-items: center;
    gap: 4px;
    height: 22px;
    white-space: nowrap;
}

.two {
    padding: 7px 0 0 8px;
    gap: 7px;
}

.caret {
    width: 7px;
    height: 4px;
    color: #222;
}

.grey {
    color: #b5bac2;
}

.vsep {
    width: 1px;
    height: 56px;
    margin: 4px 0 0 8px;
    background: #e0e1e2;
}

.addressbar {
    display: flex;
    align-items: center;
    height: 34px;
    padding-left: 12px;
    font-size: 12px;
}

.addressbar button {
    width: 29px;
}

.addressbar button > svg {
    width: 14px;
    height: 12px;
}

.addressbar .hist {
    width: 17px;
}

.addressbar .hist svg {
    width: 7px;
    height: 4px;
    color: #ccc;
}

.addressbar .up {
    width: 19px;
}

.addressbar .up svg {
    width: 12px;
    height: 14px;
}

.path {
    flex: 1;
    display: flex;
    align-items: center;
    gap: 6px;
    height: 22px;
    margin-right: 12px;
    padding-left: 3px;
    border: 1px solid #d9d9d9;
}

.arrow {
    width: 8px;
    height: 8px;
    color: #444;
}

.body {
    flex: 1;
    display: flex;
    min-height: 0;
    font-size: 12px;
}

.tree {
    flex: none;
    width: 156px;
    display: flex;
    justify-content: space-between;
}

.tree ul {
    list-style: none;
    margin: 0;
    padding: 0 0 0 32px;
}

.tree li {
    display: flex;
    align-items: center;
    gap: 5px;
    height: 24px;
    padding-left: 8px;
    white-space: nowrap;
}

.tree .root {
    padding-left: 0;
}

.vscroll {
    width: 16px;
    flex: none;
    display: flex;
    flex-direction: column;
    align-items: center;
    background: #f0f0f0;
    color: #444;
}

.vscroll svg {
    width: 10px;
    height: 6px;
    margin: 6px 0;
}

.track {
    flex: 1;
    width: 100%;
    display: flex;
    flex-direction: column;
}

.vscroll .track::before {
    content: "";
    flex: 154;
}

.vscroll .track::after {
    content: "";
    flex: 77;
}

.vscroll .thumb {
    flex: 119;
    background: #cdcdcd;
}

.pane {
    flex: 1;
    padding: 10px 8px 0 9px;
}

.pane h2 {
    display: flex;
    align-items: center;
    gap: 4px;
    margin: 0;
    font-weight: normal;
    font-size: 14px;
    line-height: 20px;
    color: #1e3287;
}

.pane h2 svg {
    width: 12px;
    height: 8px;
    color: #8a8a8a;
}

.pane h2::after {
    content: "";
    flex: 1;
    height: 1px;
    margin-left: 4px;
    background: #e2e2e2;
}

.folders {
    display: grid;
    grid-template-columns: 228px 228px;
    grid-auto-rows: 64px;
    padding: 14px 0 0 37px;
}

.folder {
    display: flex;
    gap: 5px;
    line-height: 16px;
}

.folder > svg {
    width: 40px;
    height: 44px;
    margin-top: 3px;
}

.folder b,
.folder span {
    display: block;
    font-weight: normal;
}

.folder span {
    color: #6d6d6d;
}

.pin {
    width: 10px;
    height: 10px;
    margin-top: 3px;
    color: #8c9297;
}

.explorer footer {
    height: 24px;
    padding: 2px 0 0 14px;
    font-size: 12px;
    line-height: 22px;
    color: #1e3a6e;
}

/* task manager */

.taskman {
    left: 737px;
    top: 26px;
    width: 620px;
    height: 593px;
    border: 1px solid #4a5056;
}

.taskman .titlebar {
    padding-left: 8px;
    gap: 5px;
}

.menu {
    display: flex;
    gap: 15px;
    height: 20px;
    padding-left: 7px;
    border-bottom: 1px solid #ececec;
}

.tm-tabs {
    display: flex;
    align-items: flex-end;
    height: 25px;
    border-bottom: 1px solid #d9d9d9;
}

.tm-tabs button {
    height: 20px;
    padding: 0 5px;
    background: #f0f0f0;
    border: 1px solid #d9d9d9;
    border-width: 1px 1px 0 0;
}

.tm-tabs .current {
    height: 23px;
    padding: 0 7px 3px 8px;
    background: #fff;
}

table {
    width: 569px;
    table-layout: fixed;
    border-collapse: collapse;
}

th {
    height: 56px;
    padding: 0 7px 3px;
    vertical-align: bottom;
    font-weight: normal;
    text-align: left;
    color: #4e6182;
    border-bottom: 1px solid #a5a5a5;
    background: linear-gradient(transparent 14px, #cfcfcf 40px) right / 1px 100% no-repeat;
}

.c-name {
    width: 303px;
}

.c-status {
    width: 120px;
}

.c-num {
    width: 73px;
    text-align: right;
}

.total {
    display: flex;
    justify-content: flex-end;
    margin-bottom: 3px;
    font-size: 15px;
    line-height: 20px;
    color: #222;
}

.total svg {
    width: 10px;
    height: 6px;
    margin: 5px auto 0 1px;
    color: #777;
}

td {
    height: 28px;
    padding: 0 7px;
    text-align: right;
    white-space: nowrap;
}

td > div {
    display: flex;
    align-items: center;
    gap: 6px;
}

td > div i,
.exp {
    width: 8px;
    height: 10px;
    margin: 0 6px 0 2px;
    color: #9a9a9a;
}

td:nth-child(3),
td:nth-child(4) {
    background: #f9eca8;
    border-left: 1px solid #f0e09a;
}

.selected td {
    background: #cce8ff;
}

.selected td:nth-child(3) {
    background: #dadfcd;
    border-color: #dadfcd;
}

.selected td:nth-child(4) {
    background: #d3e8e8;
    border-color: #cfe0dc;
}

.hovered td {
    background: #e5f3ff;
}

.hovered td:nth-child(3),
.hovered td:nth-child(4) {
    background: #eef1da;
    border-color: #e4e8cf;
}

td.low:nth-child(4) {
    background: #fdf4c6;
}

.hscroll {
    display: flex;
    align-items: center;
    height: 19px;
    background: #f0f0f0;
}

.hscroll svg {
    width: 8px;
    height: 10px;
    margin: 0 5px;
}

.hscroll .thumb {
    width: 433px;
    height: 15px;
    background: #cdcdcd;
}

.taskman footer {
    flex: 1;
    display: flex;
    align-items: center;
    padding-left: 8px;
    border-top: 1px solid #a5a5a5;
}

.taskman footer button {
    display: flex;
    align-items: center;
    gap: 6px;
}

.taskman footer svg {
    width: 20px;
    height: 20px;
}

/* taskbar */

.taskbar {
    flex: none;
    display: flex;
    height: 40px;
    background: linear-gradient(90deg, #041a22, #02131c 45%, #000a1a);
    color: #fff;
}

.start {
    width: 48px;
    display: grid;
    place-items: center;
}

.start svg {
    width: 16px;
    height: 16px;
}

.search {
    width: 288px;
    display: flex;
    align-items: center;
    gap: 10px;
    padding-left: 10px;
    background: #f2f2f2;
    border: 1px solid #c8c8c8;
}

.search svg {
    width: 18px;
    height: 18px;
}

.search input {
    flex: 1;
    min-width: 0;
    padding: 0;
    border: none;
    outline: none;
    background: none;
    font: 14px "Open Sans", sans-serif;
}

.search input::placeholder {
    color: #444;
    opacity: 1;
}

.apps {
    display: flex;
    gap: 1px;
}

.apps button {
    width: 48px;
    display: grid;
    place-items: center;
    border-bottom: 2px solid transparent;
}

.apps button:first-child {
    margin-right: 2px;
}

.apps .tv {
    width: 18px;
    height: 18px;
}

.apps svg {
    width: 24px;
    height: 24px;
}

.apps .open {
    border-bottom-color: #76b9ed;
}

.apps .active {
    background: #3b4a52;
}

.tray {
    margin-left: auto;
    display: flex;
    align-items: center;
    gap: 8px;
    padding-right: 25px;
}

.tray svg {
    width: 16px;
    height: 16px;
}

.clock {
    display: flex;
    flex-direction: column;
    width: 56px;
    text-align: center;
    line-height: 18px;
}

.tray button {
    margin-left: 8px;
}
```
